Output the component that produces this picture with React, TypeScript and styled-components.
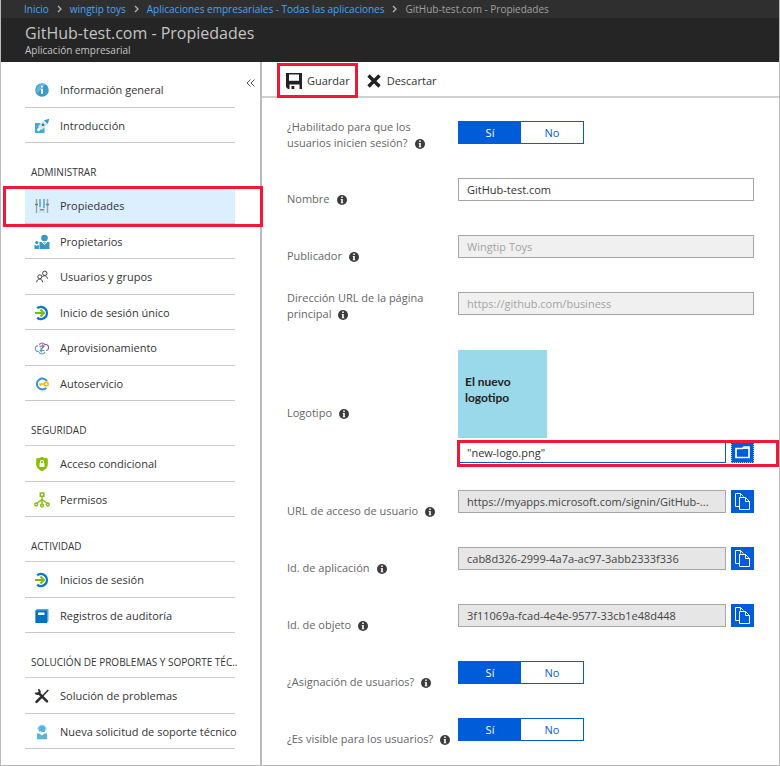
import React, { useState } from 'react';
import styled, { createGlobalStyle, css } from 'styled-components';

const red = '#f21637';
const blue = '#015cda';

const GlobalStyle = createGlobalStyle`
  * { box-sizing: border-box; }
  body {
    margin: 0;
    background: #fff;
    color: #333;
    font: 11px/16px "Open Sans", "Noto Sans", sans-serif;
  }
  button, input { font: inherit; color: inherit; }
`;

const highlight = css`
  &::after {
    content: '';
    position: absolute;
    border: 3px solid ${red};
    pointer-events: none;
    z-index: 2;
  }
`;

const Page = styled.div`
  display: flex;
  flex-direction: column;
  min-height: 100vh;
  border: solid #bbb;
  border-width: 0 1px 1px;
`;

const Breadcrumbs = styled.nav`
  display: flex;
  align-items: center;
  gap: 8px;
  height: 18px;
  padding-left: 23px;
  background: #2f2f2f;
  color: #a0a0a0;
  font-size: 10px;
  white-space: nowrap;
`;

const Crumb = styled.a`
  color: #4ba3f0;
  text-decoration: none;
`;

const CrumbArrow = styled.svg`
  width: 5px;
  height: 8px;
  flex: none;
`;

const TitleBar = styled.header`
  height: 44px;
  padding: 4px 24px 0;
  background: #252525;
  color: #c4c4c4;
`;

const Title = styled.h1`
  margin: 0;
  font-size: 16px;
  font-weight: 400;
  line-height: 22px;
`;

const Subtitle = styled.p`
  margin: 0;
  font-size: 10px;
  line-height: 13px;
`;

const Body = styled.div`
  display: flex;
  flex: 1;
`;

const Sidebar = styled.aside`
  position: relative;
  flex: none;
  width: 261px;
  padding: 9px 25px 10px 24px;
  border-right: 2px solid #bbb;
`;

const Collapse = styled.button`
  position: absolute;
  top: 13px;
  right: 1px;
  display: flex;
  align-items: center;
  justify-content: center;
  width: 16px;
  height: 16px;
  padding: 0;
  border: 0;
  background: none;
`;

const GroupTitle = styled.h2`
  margin: 0;
  padding: 21px 0 7px 6px;
  height: 44px;
  font-size: 10px;
  font-weight: 400;
  line-height: 16px;
  white-space: nowrap;
`;

const NavList = styled.ul<{ $tall?: boolean; $first?: boolean }>`
  display: flex;
  flex-direction: column;
  min-height: ${p => (p.$tall ? 214 : 72)}px;
  margin: 0;
  padding: 0;
  list-style: none;
  border-top: 1px solid ${p => (p.$first ? 'transparent' : '#ccc')};
`;

const NavItem = styled.li<{ $active?: boolean }>`
  position: relative;
  display: flex;
  flex: 1;
  border-bottom: 1px solid #c8c8c8;
  ${p => p.$active && css`
    background: #dceffe;
    ${highlight}
    &::after { inset: -2px -28px -4px -22px; }
  `}
`;

const NavLink = styled.a`
  display: flex;
  flex: 1;
  align-items: center;
  gap: 10px;
  padding: 2px 0 0 9px;
  color: #333;
  text-decoration: none;
  white-space: nowrap;
`;

const NavIcon = styled.svg`
  flex: none;
  width: 16px;
  height: 16px;
`;

const Main = styled.main`
  flex: 1;
  min-width: 0;
`;

const Toolbar = styled.div`
  display: flex;
  align-items: center;
  gap: 16px;
  height: 36px;
  padding: 4px 0 0 24px;
  border-bottom: 2px solid #d0d0d0;
`;

const ToolButton = styled.button<{ $marked?: boolean }>`
  position: relative;
  display: flex;
  align-items: center;
  gap: 5px;
  padding: 0;
  border: 0;
  background: none;
  line-height: 18px;
  ${p => p.$marked && css`
    ${highlight}
    &::after { inset: -9px -8px -8px -9px; }
  `}
`;

const ToolIcon = styled.svg`
  flex: none;
  width: 16px;
  height: 16px;
`;

const Form = styled.form`
  display: flex;
  flex-direction: column;
  gap: 25px;
  padding: 21px 25px 10px 25px;
`;

const Row = styled.div`
  display: grid;
  grid-template-columns: 171px minmax(0, 1fr);
  align-items: end;
  min-height: 32px;
`;

const Field = styled.div`
  display: flex;
  align-self: start;
  gap: 5px;
  padding-top: 2px;
`;

const LogoField = styled.div`
  display: flex;
  flex-direction: column;
  gap: 2px;
  padding-top: 3px;
`;

const Caption = styled.div<{ $middle?: boolean; $single?: boolean }>`
  color: #666;
  white-space: nowrap;
  ${p => p.$single && css`padding-bottom: 1px;`}
  ${p => p.$middle && css`align-self: center; padding-top: 15px;`}
`;

const InfoIcon = styled.svg`
  width: 10px;
  height: 10px;
  margin-left: 7px;
  vertical-align: -2px;
`;

const TextBox = styled.input<{ $kind?: 'off' | 'copy' | 'file' }>`
  flex: 1;
  min-width: 0;
  height: 23px;
  padding: 0 8px;
  border: 1px solid #a6a6a6;
  border-radius: 0;
  background: #fff;
  color: #333;
  outline: none;
  ${p => p.$kind === 'off' && css`background: #f0f0f0; color: #a3a3a3;`}
  ${p => p.$kind === 'copy' && css`background: #e6e6e6; color: #444;`}
  ${p => p.$kind === 'file' && css`padding-top: 2px; border-color: ${blue};`}
`;

const SquareButton = styled.button<{ $focused?: boolean }>`
  display: flex;
  align-items: center;
  justify-content: center;
  flex: none;
  width: 23px;
  height: 23px;
  padding: ${p => (p.$focused ? '2px 0 0' : '0')};
  border: ${p => (p.$focused ? '1px dotted #8fd0ff' : `1px solid ${blue}`)};
  background: ${blue};
`;

const FileRow = styled.div`
  position: relative;
  display: flex;
  gap: 5px;
  ${highlight}
  &::after { inset: 0 -25px -4px -1px; }
`;

const LogoTile = styled.div`
  display: flex;
  align-items: center;
  width: 89px;
  height: 88px;
  padding: 0 7px 8px;
  background: #9ad9e9;
  color: #222;
  font: bold 12px/16px Lato, "Open Sans", sans-serif;
`;

const Switch = styled.div`
  display: grid;
  grid-template-columns: 1fr 1fr;
  width: 126px;
  height: 23px;
  border: 1px solid ${blue};
`;

const Choice = styled.label`
  position: relative;
  display: flex;
  align-items: center;
  justify-content: center;
  color: ${blue};
  cursor: pointer;
  &:has(input:checked) { background: ${blue}; color: #fff; }
`;

const Radio = styled.input`
  position: absolute;
  inset: 0;
  margin: 0;
  opacity: 0;
`;

type IconName = 'info' | 'rocket' | 'sliders' | 'owners' | 'users' | 'signin' | 'sync' | 'self'
  | 'shield' | 'tree' | 'book' | 'tools' | 'support';

const drawings: Record<IconName, React.ReactNode> = {
  info: (
    <>
      <circle cx="8" cy="8" r="6.8" fill="#3a9bcb" />
      <path d="M3 11.5A6.8 6.8 0 0 1 11.5 2.2Z" fill="#65b6dc" />
      <circle cx="8" cy="4.6" r="1.1" fill="#fff" />
      <path d="M6.7 6.8H9V11.7H7.1V7.8H6.7Z" fill="#fff" />
    </>
  ),
  rocket: (
    <>
      <path d="M1 5H7L5 8.5L7.5 11L10.5 9V15H1Z" fill="#45a9d8" />
      <path d="M4 8.5L7 5L11 2L14 5L11 9L7.5 12Z" fill="#dfe3e6" />
      <path d="M10 2.3L15.3.7L13.8 6Z" fill="#3999c6" />
      <circle cx="9" cy="6.8" r="1.4" fill="#2683b5" />
      <path d="M2.5 12L5.2 9L7.3 10.5L5 13.5Z" fill="#f4f8fa" />
    </>
  ),
  sliders: (
    <>
      <path d="M2.5 1V15M13.5 1V15" stroke="#a2a2a2" strokeWidth="1.4" />
      <path d="M6 1V15M10 1V15" stroke="#a9d3e8" strokeWidth="1" />
      <path d="M6 1V9M10 1V10" stroke="#4ba8d4" strokeWidth="1.4" />
      <path d="M1 6.5H4M12 6.5H15M6.3 11.8H9.7" stroke="#747c82" strokeWidth="1.4" />
    </>
  ),
  owners: (
    <g fill="#3999c6">
      <circle cx="10.5" cy="4" r="3.3" />
      <path d="M5.5 8H7.5L10.5 11L13.5 8H15.5V15H5.5Z" />
      <circle cx="2.8" cy="8.6" r="1.7" />
      <path d="M.5 11H1.8L2.8 12L3.8 11H4.9V15H.5Z" />
      <path d="M8.4 7.9H12.6L10.5 10.2Z" fill="#8bc6e3" />
    </g>
  ),
  users: (
    <g fill="none" stroke="#3e3e3e" strokeWidth="1">
      <circle cx="10.8" cy="4.3" r="2.2" />
      <path d="M8.4 8C9.6 5.9 12.7 6.2 13.5 9.7" />
      <circle cx="5.8" cy="7.8" r="2" />
      <path d="M2.7 13.3C2.9 8.9 8.3 8.9 8.6 13.3" />
    </g>
  ),
  signin: (
    <>
      <path d="M3.2 3.3A6 6 0 1 1 3.2 12.7" fill="none" stroke="#0b78ca" strokeWidth="2.4" />
      <path d="M1 8H9.5M6.4 4.6L10 8L6.4 11.4" fill="none" stroke="#7fba00" strokeWidth="2" />
    </>
  ),
  sync: (
    <g fill="none" strokeWidth="1.1">
      <path d="M4.8 11.5A2.9 2.9 0 0 1 4 5.6" stroke="#7190c8" />
      <path d="M5.3 4.6A3.2 3.2 0 0 1 10.8 4.6A3 3 0 0 1 12.2 10.6" stroke="#8955a8" />
      <path d="M5 12A3.3 3.3 0 0 0 11 12" stroke="#5b9fd8" />
      <path d="M5.5 6.3H9.5M8.2 4.6L10 6.3L8.2 8" stroke="#845db0" />
      <path d="M6.3 7.8L8.5 9.2" stroke="#6aa843" />
      <path d="M10.5 10.5H6.5M8 8.9L6.2 10.5L8 12.2" stroke="#3aa4d4" />
    </g>
  ),
  self: (
    <>
      <path d="M13 5A5.5 5.5 0 1 0 12.4 11.8" fill="none" stroke="#2f8fd4" strokeWidth="1.9" />
      <path d="M5 8H11M6.5 8V10" stroke="#fdb913" strokeWidth="1.6" />
      <circle cx="12.2" cy="8" r="2" fill="#fff" stroke="#fdb913" strokeWidth="1.5" />
    </>
  ),
  shield: (
    <>
      <path d="M8 .8C9.8 2.1 11.8 2.5 13.8 2.5V8C13.8 11.5 11 13.8 8 15.3C5 13.8 2.2 11.5 2.2 8V2.5C4.2 2.5 6.2 2.1 8 .8Z" fill="#86c000" />
      <path d="M5.5 7H10.5V11H5.5Z" fill="#fff" />
      <path d="M6.6 7V5.8A1.4 1.4 0 0 1 9.4 5.8V7" fill="none" stroke="#fff" strokeWidth="1.1" />
    </>
  ),
  tree: (
    <g fill="none" stroke="#86bd18" strokeWidth="1.5">
      <path d="M6.3 1H9.8V4.2H6.3Z" />
      <path d="M8 4.2V12M8 7.5L2.5 11.5M8 7.5L13.5 11.5" />
      <circle cx="2.2" cy="12.5" r="1.4" />
      <circle cx="8" cy="13.6" r="1.4" />
      <circle cx="13.8" cy="12.5" r="1.4" />
    </g>
  ),
  book: (
    <>
      <path d="M1.5 2.5L3 1H14.5V13L13 15H1.5Z" fill="#5ba5dc" />
      <path d="M1.5 2.5H13V15H1.5Z" fill="#0072c6" />
      <path d="M4 4.5H10.5V7H4Z" fill="#fff" />
    </>
  ),
  tools: (
    <g fill="none" stroke="#2b2b2b">
      <path d="M4.5 4.8L13 13.3" strokeWidth="2.5" strokeLinecap="round" />
      <path d="M4.2 1.6A2.3 2.3 0 1 1 1.4 4.6" strokeWidth="1.8" />
      <path d="M2.5 13.8L7.5 8.8" strokeWidth="2.6" strokeLinecap="round" />
      <path d="M8 8.5L14.3 2" strokeWidth="1.6" />
    </g>
  ),
  support: (
    <>
      <circle cx="8" cy="5" r="3.6" fill="#59b4d9" />
      <path d="M3.7 5.5A4.3 4.3 0 0 1 12.3 5.5" fill="none" stroke="#8accea" strokeWidth="1" />
      <path d="M3 9.5H5.5L8 11.5L10.5 9.5H13V15.3H3Z" fill="#59b4d9" />
      <path d="M5.5 7.3L8 8.5H10.5" fill="none" stroke="#fff" strokeWidth=".8" />
    </>
  ),
};

const Icon = ({ name }: { name: IconName }) => (
  <NavIcon viewBox="0 0 16 16" aria-hidden="true">{drawings[name]}</NavIcon>
);

const Info = () => (
  <InfoIcon viewBox="0 0 10 10" aria-hidden="true">
    <circle cx="5" cy="5" r="5" fill="#3c3c3c" />
    <path d="M4.2 1.6H5.8V3.1H4.2ZM3.7 4H5.8V7.4H6.3V8.3H3.7V7.4H4.2V4.8H3.7Z" fill="#fff" />
  </InfoIcon>
);

const Arrow = () => (
  <CrumbArrow viewBox="0 0 5 8" aria-hidden="true">
    <path d="M1 1L4 4L1 7" fill="none" stroke="#b5b5b5" strokeWidth="1.3" />
  </CrumbArrow>
);

const CopyIcon = () => (
  <svg width="17" height="17" viewBox="0 0 17 17" fill="none" stroke="#fff" aria-hidden="true">
    <path d="M5.5 13.5H1.5V.5H6.5L9.5 3.5" />
    <path d="M6.5 .5V3.5" />
    <path d="M5.5 4.5H11.5L15.5 8.5V16.5H5.5Z" fill={blue} />
    <path d="M11.5 4.5V8.5H15.5" />
  </svg>
);

const FolderIcon = () => (
  <svg width="17" height="15" viewBox="0 0 17 15" fill="none" stroke="#fff" strokeWidth="1.7" aria-hidden="true">
    <path d="M2 3.5H8.5L10 2H15V12.5H2Z" />
    <path d="M9 3.2H15" strokeWidth="1.4" />
  </svg>
);

type Entry = [IconName, string];
const groups: { title?: string; items: Entry[] }[] = [
  { items: [['info', 'Información general'], ['rocket', 'Introducción']] },
  {
    title: 'ADMINISTRAR',
    items: [
      ['sliders', 'Propiedades'],
      ['owners', 'Propietarios'],
      ['users', 'Usuarios y grupos'],
      ['signin', 'Inicio de sesión único'],
      ['sync', 'Aprovisionamiento'],
      ['self', 'Autoservicio'],
    ],
  },
  { title: 'SEGURIDAD', items: [['shield', 'Acceso condicional'], ['tree', 'Permisos']] },
  { title: 'ACTIVIDAD', items: [['signin', 'Inicios de sesión'], ['book', 'Registros de auditoría']] },
  {
    title: 'SOLUCIÓN DE PROBLEMAS Y SOPORTE TÉC..',
    items: [['tools', 'Solución de problemas'], ['support', 'Nueva solicitud de soporte técnico']],
  },
];

const Lines = ({ lines }: { lines: string[] }) => (
  <>
    {lines.map((line, i) => <React.Fragment key={line}>{i > 0 && <br />}{line}</React.Fragment>)}
    <Info />
  </>
);

const Toggle = ({ id, lines }: { id: string; lines: string[] }) => {
  const [on, setOn] = useState(true);
  return (
    <Row>
      <Caption id={`${id}-caption`} $single={lines.length === 1}><Lines lines={lines} /></Caption>
      <Field>
        <Switch role="radiogroup" aria-labelledby={`${id}-caption`}>
          <Choice><Radio type="radio" name={id} checked={on} onChange={() => setOn(true)} />Sí</Choice>
          <Choice><Radio type="radio" name={id} checked={!on} onChange={() => setOn(false)} />No</Choice>
        </Switch>
      </Field>
    </Row>
  );
};

const TextRow = ({ id, lines, value, kind }: { id: string; lines: string[]; value: string; kind?: 'off' | 'copy' }) => (
  <Row>
    <Caption as="label" htmlFor={id} $single={lines.length === 1}><Lines lines={lines} /></Caption>
    <Field>
      <TextBox id={id} type="text" defaultValue={value} $kind={kind} disabled={kind === 'off'} readOnly={kind === 'copy'} />
      {kind === 'copy' && <SquareButton type="button" aria-label="Copiar"><CopyIcon /></SquareButton>}
    </Field>
  </Row>
);

export default function App() {
  return (
    <>
      <GlobalStyle />
      <Page>
        <Breadcrumbs aria-label="Ruta">
          <Crumb href="#">Inicio</Crumb><Arrow />
          <Crumb href="#">wingtip toys</Crumb><Arrow />
          <Crumb href="#">Aplicaciones empresariales - Todas las aplicaciones</Crumb><Arrow />
          <span>GitHub-test.com - Propiedades</span>
        </Breadcrumbs>
        <TitleBar>
          <Title>GitHub-test.com - Propiedades</Title>
          <Subtitle>Aplicación empresarial</Subtitle>
        </TitleBar>
        <Body>
          <Sidebar>
            <Collapse type="button" aria-label="Contraer">
              <svg width="10" height="8" viewBox="0 0 10 8" fill="none" stroke="#555" aria-hidden="true">
                <path d="M4.5 .5L1 4L4.5 7.5M8.5 .5L5 4L8.5 7.5" />
              </svg>
            </Collapse>
            <nav>
              {groups.map((group, i) => (
                <section key={i}>
                  {group.title && <GroupTitle>{group.title}</GroupTitle>}
                  <NavList $tall={group.items.length > 2} $first={!group.title}>
                    {group.items.map(([icon, text]) => (
                      <NavItem key={text} $active={text === 'Propiedades'}>
                        <NavLink href="#"><Icon name={icon} />{text}</NavLink>
                      </NavItem>
                    ))}
                  </NavList>
                </section>
              ))}
            </nav>
          </Sidebar>
          <Main>
            <Toolbar>
              <ToolButton type="button" $marked>
                <ToolIcon viewBox="0 0 16 16" aria-hidden="true">
                  <path d="M0 0H16V16H13.5V11.5H3.5V16H2L0 14Z" fill="#222" />
                  <path d="M3 1.5H13V7.8H3Z" fill="#fff" />
                  <path d="M5.5 13H8.3V16H5.5Z" fill="#222" />
                </ToolIcon>
                Guardar
              </ToolButton>
              <ToolButton type="button">
                <ToolIcon viewBox="0 0 16 16" aria-hidden="true">
                  <path d="M2.5 2.5L13.5 13.5M13.5 2.5L2.5 13.5" stroke="#222" strokeWidth="3.4" />
                </ToolIcon>
                Descartar
              </ToolButton>
            </Toolbar>
            <Form>
              <Toggle id="enabled" lines={['¿Habilitado para que los', 'usuarios inicien sesión?']} />
              <TextRow id="name" lines={['Nombre']} value="GitHub-test.com" />
              <TextRow id="publisher" lines={['Publicador']} value="Wingtip Toys" kind="off" />
              <TextRow id="homepage" lines={['Dirección URL de la página', 'principal']} value="https://github.com/business" kind="off" />
              <Row>
                <Caption as="label" htmlFor="logo" $middle>Logotipo<Info /></Caption>
                <LogoField>
                  <LogoTile>El nuevo<br />logotipo</LogoTile>
                  <FileRow>
                    <TextBox id="logo" type="text" defaultValue={'"new-logo.png"'} $kind="file" />
                    <SquareButton type="button" aria-label="Examinar" $focused><FolderIcon /></SquareButton>
                  </FileRow>
                </LogoField>
              </Row>
              <TextRow id="access-url" lines={['URL de acceso de usuario']} value="https://myapps.microsoft.com/signin/GitHub-..." kind="copy" />
              <TextRow id="app-id" lines={['Id. de aplicación']} value="cab8d326-2999-4a7a-ac97-3abb2333f336" kind="copy" />
              <TextRow id="object-id" lines={['Id. de objeto']} value="3f11069a-fcad-4e4e-9577-33cb1e48d448" kind="copy" />
              <Toggle id="assignment" lines={['¿Asignación de usuarios?']} />
              <Toggle id="visible" lines={['¿Es visible para los usuarios?']} />
            </Form>
          </Main>
        </Body>
      </Page>
    </>
  );
}
